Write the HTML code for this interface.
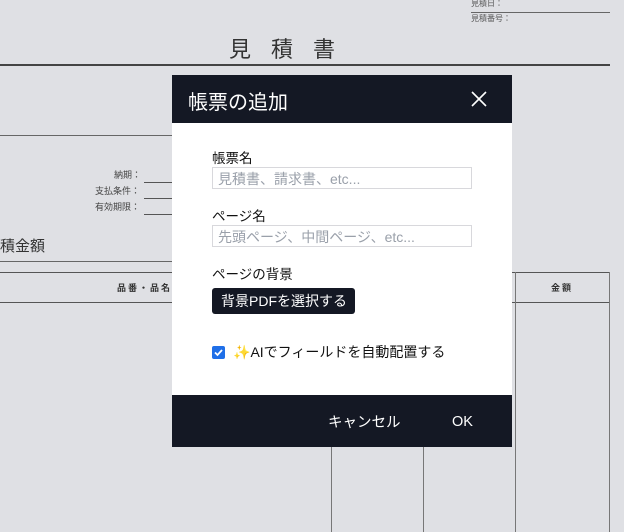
<!DOCTYPE html>
<html><head><meta charset="utf-8"><style>
*{margin:0;padding:0;box-sizing:border-box}
body{width:624px;height:532px;background:#dfe0e4;position:relative;overflow:hidden;font-family:"Liberation Sans","Noto Sans CJK JP",sans-serif;color:#222}
.a{position:absolute}
.l{position:absolute;background:#555}
.dlg{position:absolute;left:172px;top:75px;width:340px;height:372px;background:#fff}
.hd{height:48px;background:#141824;color:#fff;font-size:20px;padding:11px 0 0 16px}
.ft{position:absolute;left:0;top:320px;width:340px;height:52px;background:#141824;color:#fff;font-size:14.5px}
.lab{position:absolute;left:40px;font-size:13.5px;color:#111}
.inp{position:absolute;left:40px;width:260px;height:22px;border:1px solid #d8d8dc;font-size:14px;color:#9aa0aa;padding:1px 0 0 5px}
</style></head><body>
<div class="a" style="left:471px;top:-2px;font-size:8px;color:#555">見積日：</div>
<div class="l" style="left:471px;top:12px;width:139px;height:1px;background:#666"></div>
<div class="a" style="left:471px;top:13px;font-size:8px;color:#555">見積番号：</div>
<div class="a" style="left:229px;top:32px;font-size:22px;letter-spacing:20px;color:#333">見積書</div>
<div class="l" style="left:0;top:64px;width:610px;height:2px;background:#444"></div>
<div class="l" style="left:0;top:135px;width:172px;height:1px;background:#666"></div>
<div class="a" style="left:114px;top:168px;font-size:9px;color:#444">納期：</div>
<div class="a" style="left:95px;top:184px;font-size:9px;color:#444">支払条件：</div>
<div class="a" style="left:95px;top:200px;font-size:9px;color:#444">有効期限：</div>
<div class="l" style="left:144px;top:182px;width:28px;height:1px"></div>
<div class="l" style="left:144px;top:198px;width:28px;height:1px"></div>
<div class="l" style="left:144px;top:214px;width:28px;height:1px"></div>
<div class="a" style="left:0;top:235px;font-size:15px;color:#333">積金額</div>
<div class="l" style="left:0;top:261px;width:172px;height:1px;background:#666"></div>
<div class="l" style="left:0;top:272px;width:610px;height:1px"></div>
<div class="l" style="left:0;top:302px;width:610px;height:1px"></div>
<div class="a" style="left:117px;top:281px;font-size:9px;color:#333;letter-spacing:2px;font-weight:bold">品番・品名</div>
<div class="a" style="left:551px;top:281px;font-size:9px;color:#333;letter-spacing:2px;font-weight:bold">金額</div>
<div class="l" style="left:331px;top:272px;width:1px;height:260px;background:#777"></div>
<div class="l" style="left:423px;top:272px;width:1px;height:260px;background:#777"></div>
<div class="l" style="left:515px;top:272px;width:1px;height:260px;background:#777"></div>
<div class="l" style="left:609px;top:272px;width:1px;height:260px;background:#777"></div>
<div class="dlg">
<div class="hd">帳票の追加
<svg class="a" style="left:299px;top:16px" width="16" height="16"><path d="M1 1L15 15M15 1L1 15" stroke="#fff" stroke-width="1.6"/></svg></div>
<div class="lab" style="top:72px">帳票名</div>
<div class="inp" style="top:92px">見積書、請求書、etc...</div>
<div class="lab" style="top:130px">ページ名</div>
<div class="inp" style="top:150px">先頭ページ、中間ページ、etc...</div>
<div class="lab" style="top:188px">ページの背景</div>
<div class="a" style="left:40px;top:213px;width:143px;height:26px;background:#141824;border-radius:3px;color:#fff;font-size:14px;padding:3px 0 0 9px">背景PDFを選択する</div>
<div class="a" style="left:40px;top:271px;width:13px;height:13px;background:#1f6fe8;border-radius:2px"><svg width="13" height="13"><path d="M3 6.5L5.5 9L10 4" stroke="#fff" stroke-width="1.8" fill="none"/></svg></div>
<div class="a" style="left:61px;top:267px;font-size:14px;color:#111"><span style="color:#f5c542">✨</span>AIでフィールドを自動配置する</div>
<div class="ft"><span class="a" style="left:156px;top:16px">キャンセル</span><span class="a" style="left:280px;top:19px">OK</span></div>
</div>
</body></html>
